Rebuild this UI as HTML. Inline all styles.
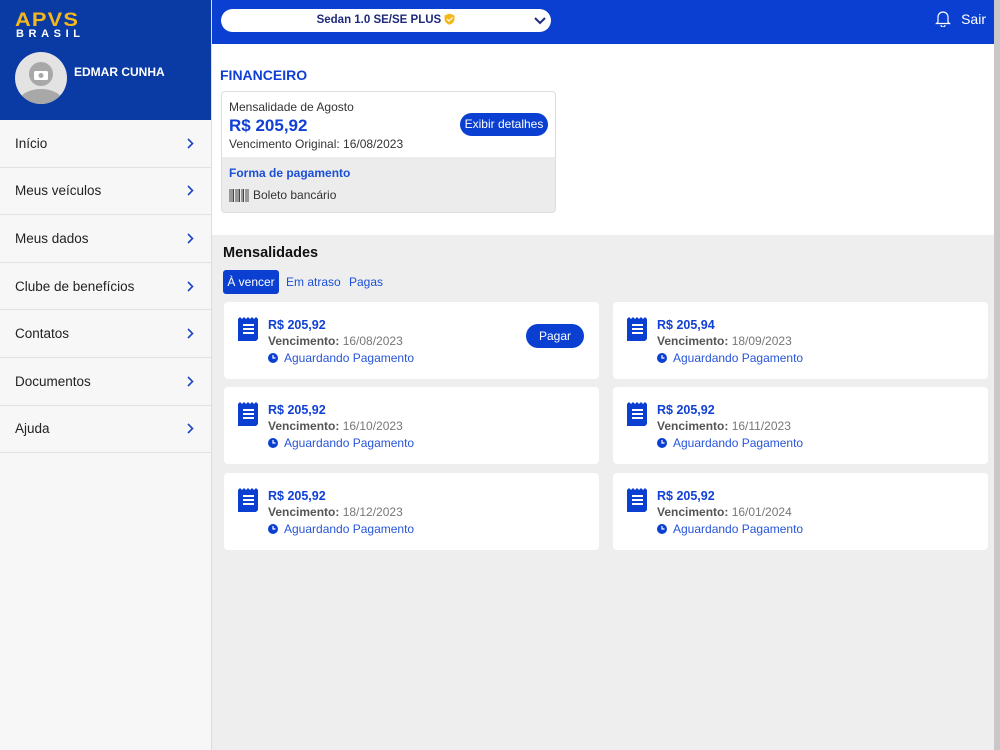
<!DOCTYPE html>
<html><head><meta charset="utf-8"><style>
*{box-sizing:border-box;margin:0;padding:0}
body{width:1000px;height:750px;overflow:hidden;font-family:"Liberation Sans",sans-serif;background:#fff;position:relative}
.side{position:absolute;left:0;top:0;width:212px;height:750px;background:#f7f7f7;border-right:1px solid #ddd}
.sh{height:120px;background:#0a3aa3;position:relative}
.logo1{position:absolute;left:15px;top:10px;color:#f5b81c;font-weight:bold;font-size:19px;letter-spacing:1px;transform:scaleX(1.15);transform-origin:left}
.logo2{position:absolute;left:16px;top:28px;color:#fff;font-weight:bold;font-size:11px;letter-spacing:4.6px}
.av{position:absolute;left:15px;top:52px;width:52px;height:52px;border-radius:50%;background:#e3e3e3;overflow:hidden}
.name{position:absolute;left:74px;top:65px;color:#fff;font-size:12px;font-weight:bold}
.mi{height:47.6px;border-bottom:1px solid #e2e2e2;display:flex;align-items:center;justify-content:space-between;padding:0 17px 0 15px;font-size:13.5px;color:#222}
.top{position:absolute;left:212px;top:0;width:782px;height:44px;background:#0a3fd1}
.sel{position:absolute;left:9px;top:9px;width:330px;height:23px;background:#fff;border-radius:12px;text-align:center;font-size:11.5px;font-weight:bold;color:#1e2a7a;line-height:23px}
.sair{position:absolute;right:8px;top:11px;color:#fff;font-size:14px}
.scroll{position:absolute;left:994px;top:0;width:6px;height:750px;background:#c8c8c8}
.fin{position:absolute;left:220px;top:67px;color:#1140d6;font-size:14px;font-weight:bold}
.box{position:absolute;left:221px;top:91px;width:335px;height:122px;border:1px solid #ddd;border-radius:4px;overflow:hidden;background:#ececec}
.bt{height:65px;background:#fff;padding:8px 7px;position:relative}
.btn{position:absolute;background:#0a3fd1;color:#fff;border-radius:12px;font-size:12px;text-align:center}
.gray{position:absolute;left:212px;top:235px;width:782px;height:515px;background:#eeeeee}
.tab{position:absolute;top:270px;font-size:12px;color:#1a4fd6;line-height:24px}
.card{position:absolute;width:375px;height:77px;background:#fff;border-radius:4px}
.card svg.r{position:absolute;left:14px;top:15px}
.am{position:absolute;left:44px;top:16px;color:#1140d6;font-weight:bold;font-size:12.5px}
.vn{position:absolute;left:44px;top:32px;color:#777;font-size:12px}
.vn b{color:#555;font-weight:bold}
.ag{position:absolute;left:60px;top:49px;color:#2655d9;font-size:12px;line-height:14px}
.ag svg{position:absolute;left:-16px;top:2px}
</style></head><body>
<div class="side">
 <div class="sh">
  <div class="logo1">APVS</div><div class="logo2">BRASIL</div>
  <div class="av"><svg width="52" height="52"><circle cx="26" cy="22" r="12" fill="#a8a8a8"/><ellipse cx="26" cy="50" rx="22" ry="13" fill="#a8a8a8"/><rect x="19" y="19" width="14" height="9" rx="1.5" fill="#fff"/><circle cx="26" cy="23.5" r="2.5" fill="#a8a8a8"/></svg></div>
  <div class="name">EDMAR CUNHA</div>
 </div>
 <div class="mi">Início<svg width="7" height="11" viewBox="0 0 7 11"><path d="M1 1l4.5 4.5L1 10" stroke="#1b46c4" stroke-width="1.6" fill="none"/></svg></div>
 <div class="mi">Meus veículos<svg width="7" height="11" viewBox="0 0 7 11"><path d="M1 1l4.5 4.5L1 10" stroke="#1b46c4" stroke-width="1.6" fill="none"/></svg></div>
 <div class="mi">Meus dados<svg width="7" height="11" viewBox="0 0 7 11"><path d="M1 1l4.5 4.5L1 10" stroke="#1b46c4" stroke-width="1.6" fill="none"/></svg></div>
 <div class="mi">Clube de benefícios<svg width="7" height="11" viewBox="0 0 7 11"><path d="M1 1l4.5 4.5L1 10" stroke="#1b46c4" stroke-width="1.6" fill="none"/></svg></div>
 <div class="mi">Contatos<svg width="7" height="11" viewBox="0 0 7 11"><path d="M1 1l4.5 4.5L1 10" stroke="#1b46c4" stroke-width="1.6" fill="none"/></svg></div>
 <div class="mi">Documentos<svg width="7" height="11" viewBox="0 0 7 11"><path d="M1 1l4.5 4.5L1 10" stroke="#1b46c4" stroke-width="1.6" fill="none"/></svg></div>
 <div class="mi">Ajuda<svg width="7" height="11" viewBox="0 0 7 11"><path d="M1 1l4.5 4.5L1 10" stroke="#1b46c4" stroke-width="1.6" fill="none"/></svg></div>
</div>
<div class="top">
 <div class="sel">Sedan 1.0 SE/SE PLUS <svg width="11" height="12" style="vertical-align:-2px" viewBox="0 0 11 12"><path d="M5.5 0.5L10.5 2.5V6C10.5 9 8 11 5.5 11.7 3 11 .5 9 .5 6V2.5Z" fill="#f5b81c"/><path d="M3 6l2 2 3.5-3.5" stroke="#fff" stroke-width="1.2" fill="none"/></svg>
  <svg width="12" height="8" style="position:absolute;right:5px;top:8px" viewBox="0 0 12 8"><path d="M1 1l5 5 5-5" stroke="#1e2a7a" stroke-width="2" fill="none"/></svg></div>
 <svg width="16" height="17" style="position:absolute;left:723px;top:10px" viewBox="0 0 16 17"><path d="M3 12V7a5 5 0 0110 0v5l1.5 1.5h-13z M6 15a2 2 0 004 0" stroke="#fff" stroke-width="1.2" fill="none"/></svg>
 <div class="sair">Sair</div>
</div>
<div class="scroll"></div>
<div class="fin">FINANCEIRO</div>
<div class="box">
 <div class="bt">
  <div style="font-size:12px;color:#333">Mensalidade de Agosto</div>
  <div style="font-size:17px;color:#1140d6;font-weight:bold;margin-top:2px">R$ 205,92</div>
  <div style="font-size:12px;color:#333;margin-top:1px">Vencimento Original: 16/08/2023</div>
  <div class="btn" style="left:238px;top:21px;width:88px;height:23px;line-height:23px">Exibir detalhes</div>
 </div>
 <div style="padding:9px 7px">
  <div style="color:#1a4fd6;font-size:12px;font-weight:bold">Forma de pagamento</div>
  <div style="font-size:12px;color:#333;margin-top:8px;display:flex;align-items:center"><svg width="20" height="13" viewBox="0 0 20 13" style="margin-right:4px"><path d="M1 0v13M3 0v13M4.5 0v13M7 0v13M9 0v13M10.5 0v13M13 0v13M14.5 0v13M17 0v13M19 0v13" stroke="#444" stroke-width="1"/></svg>Boleto bancário</div>
 </div>
</div>
<div class="gray"></div>
<div style="position:absolute;left:223px;top:245px;font-size:14.5px;font-weight:bold;color:#111">Mensalidades</div>
<div class="tab" style="left:223px;width:56px;background:#0a3fd1;color:#fff;border-radius:3px;text-align:center">À vencer</div>
<div class="tab" style="left:286px">Em atraso</div>
<div class="tab" style="left:349px">Pagas</div>
<div id="c"></div>
<script>
var d=[[224,302,"205,92","16/08/2023",1],[613,302,"205,94","18/09/2023"],[224,387,"205,92","16/10/2023"],[613,387,"205,92","16/11/2023"],[224,473,"205,92","18/12/2023"],[613,473,"205,92","16/01/2024"]];
var h="";d.forEach(function(x){h+='<div class="card" style="left:'+x[0]+'px;top:'+x[1]+'px"><svg class="r" width="22" height="24" viewBox="0 0 22 24"><path d="M0 2l2-2 2 2 2-2 2 2 2-2 2 2 2-2 2 2 2-2 2 2V22l-2 2H0z" fill="#0a3fd1"/><path d="M5 8h11M5 12h11M5 16h11" stroke="#fff" stroke-width="2"/></svg><div class="am">R$ '+x[2]+'</div><div class="vn"><b>Vencimento:</b> '+x[3]+'</div><div class="ag"><svg width="10" height="10" viewBox="0 0 10 10"><circle cx="5" cy="5" r="5" fill="#0a3fd1"/><path d="M5 2v3h2.5" stroke="#fff" stroke-width="1.2" fill="none"/></svg>Aguardando Pagamento</div>'+(x[4]?'<div class="btn" style="left:302px;top:22px;width:58px;height:24px;line-height:24px">Pagar</div>':'')+'</div>';});
document.getElementById("c").innerHTML=h;
</script>
</body></html>
